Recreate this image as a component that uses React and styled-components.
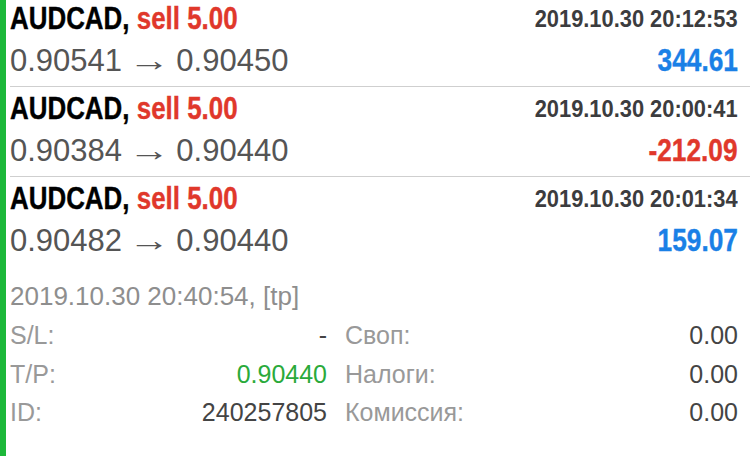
import React from "react";
import styled, { createGlobalStyle } from "styled-components";

const Global = createGlobalStyle`
  html, body { margin: 0; padding: 0; background: #fff; }
  body { width: 750px; height: 456px; overflow: hidden; font-family: "Liberation Sans", Arial, sans-serif; }
`;

const Page = styled.div`
  display: flex;
  width: 750px;
  height: 456px;
  overflow: hidden;
  background: #fff;
`;

const Bar = styled.div`
  flex: 0 0 6px;
  background: #1db83a;
`;

const Content = styled.div`
  flex: 1;
  padding-left: 4px;
  margin-top: -3px;
`;

const Row = styled.div`
  display: flex;
  flex-direction: column;
  box-sizing: border-box;
  height: 90px;
  padding-top: 3px;
  padding-right: 12px;
  border-bottom: ${(p) => (p.$last ? "none" : "1px solid #cfcfcf")};
`;

const Line = styled.div`
  display: flex;
  justify-content: space-between;
  align-items: baseline;
  height: ${(p) => p.$h}px;
  line-height: ${(p) => p.$h}px;
  margin-top: ${(p) => p.$mt || 0}px;
`;

const Condensed = styled.span`
  display: inline-block;
  font-family: "Liberation Sans", Arial, sans-serif;
  font-weight: 700;
  white-space: nowrap;
  -webkit-text-stroke: ${(p) => p.$stroke || 0}px currentColor;
  transform: scaleX(${(p) => p.$sx});
  transform-origin: ${(p) => (p.$right ? "right" : "left")} center;
`;

const Title = styled(Condensed)`
  font-size: 32px;
  color: #000;
`;

const Sell = styled.span`
  color: #e0382b;
`;

const Time = styled(Condensed)`
  font-size: 23px;
  color: #3c3c3e;
  position: relative;
  top: -2px;
`;

const Price = styled.span`
  font-size: 31px;
  color: #555;
  white-space: nowrap;
`;

const Arrow = styled.span`
  display: inline-block;
  margin: 0 3px;
  transform: scaleX(1.35);
`;

const Profit = styled(Condensed)`
  font-size: 32px;
  color: ${(p) => (p.$neg ? "#e0382b" : "#1a80e6")};
`;

const Details = styled.div`
  padding-right: 12px;
  padding-top: 9px;
`;

const CloseInfo = styled.div`
  font-size: 26px;
  color: #8e8e8e;
  line-height: 40px;
`;

const Grid = styled.div`
  display: grid;
  grid-template-columns: 335px 1fr auto;
  font-size: 25px;
  line-height: 38.5px;
`;

const Cell = styled.div`
  display: flex;
  justify-content: space-between;
  padding-right: 18px;
`;

const Label = styled.span`
  color: #999;
`;

const Value = styled.span`
  color: ${(p) => p.$color || "#444"};
  text-align: right;
`;

const trades = [
  { time: "2019.10.30 20:12:53", from: "0.90541", to: "0.90450", profit: "344.61" },
  { time: "2019.10.30 20:00:41", from: "0.90384", to: "0.90440", profit: "-212.09", neg: true },
  { time: "2019.10.30 20:01:34", from: "0.90482", to: "0.90440", profit: "159.07" },
];

const details = [
  ["S/L:", "-", null, "Своп:", "0.00"],
  ["T/P:", "0.90440", "#2aaa3a", "Налоги:", "0.00"],
  ["ID:", "240257805", null, "Комиссия:", "0.00"],
];

export default function App() {
  return (
    <Page>
      <Global />
      <Bar />
      <Content>
        {trades.map((t, i) => (
          <Row key={i} $last={i === trades.length - 1}>
            <Line $h={36}>
              <Title $sx={0.81} $stroke={0.4}>
                AUDCAD, <Sell>sell 5.00</Sell>
              </Title>
              <Time $sx={0.95} $right>
                {t.time}
              </Time>
            </Line>
            <Line $h={40} $mt={4}>
              <Price>
                {t.from} <Arrow>→</Arrow> {t.to}
              </Price>
              <Profit $sx={0.82} $stroke={0.4} $right $neg={t.neg}>
                {t.profit}
              </Profit>
            </Line>
          </Row>
        ))}
        <Details>
          <CloseInfo>2019.10.30 20:40:54, [tp]</CloseInfo>
          <Grid>
            {details.map((d, i) => (
              <React.Fragment key={i}>
                <Cell>
                  <Label>{d[0]}</Label>
                  <Value $color={d[2]}>{d[1]}</Value>
                </Cell>
                <Label>{d[3]}</Label>
                <Value>{d[4]}</Value>
              </React.Fragment>
            ))}
          </Grid>
        </Details>
      </Content>
    </Page>
  );
}
